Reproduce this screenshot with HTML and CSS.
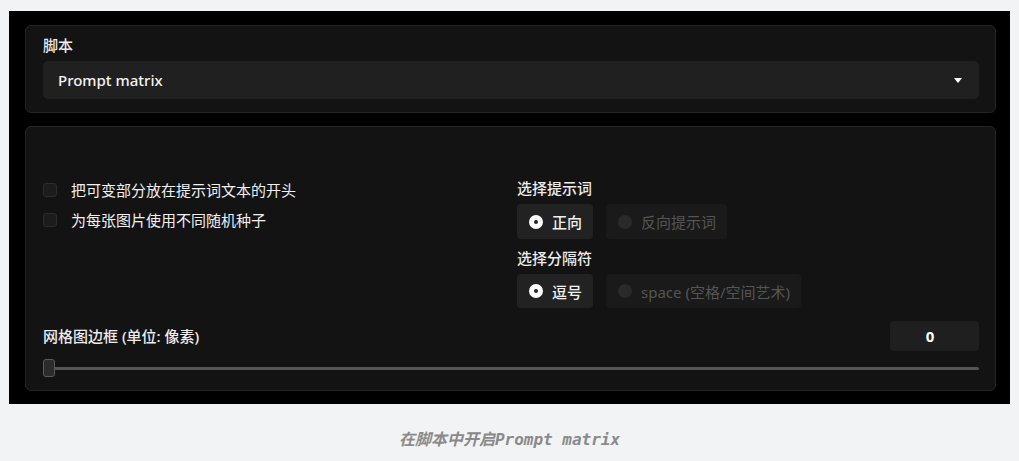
FILE: index.html
```html
<!doctype html>
<html lang="zh-CN">
    <head>
        <meta charset="UTF-8" />
        <meta name="viewport" content="width=device-width, initial-scale=1.0" />
        <title>Prompt matrix</title>
        <link rel="stylesheet" href="styles.css">
    </head>
    <body>
        <div class="shot">
            <div class="panel panel-script">
                <div class="label">脚本</div>
                <div class="select">
                    <span>Prompt matrix</span>
                    <span class="caret"></span>
                </div>
            </div>

            <div class="panel panel-options">
                <div class="columns">
                    <div class="checks">
                        <div class="check-row">
                            <span class="checkbox"></span>
                            <span>把可变部分放在提示词文本的开头</span>
                        </div>
                        <div class="check-row">
                            <span class="checkbox"></span>
                            <span>为每张图片使用不同随机种子</span>
                        </div>
                    </div>

                    <div class="radios">
                        <div class="label">选择提示词</div>
                        <div class="radio-row">
                            <div class="radio-option">
                                <span class="radio checked"></span>
                                <span>正向</span>
                            </div>
                            <div class="radio-option disabled">
                                <span class="radio"></span>
                                <span>反向提示词</span>
                            </div>
                        </div>

                        <div class="label label-gap">选择分隔符</div>
                        <div class="radio-row">
                            <div class="radio-option">
                                <span class="radio checked"></span>
                                <span>逗号</span>
                            </div>
                            <div class="radio-option disabled">
                                <span class="radio"></span>
                                <span>space (空格/空间艺术)</span>
                            </div>
                        </div>
                    </div>
                </div>

                <div class="slider-block">
                    <div class="slider-head">
                        <div class="label">网格图边框 (单位: 像素)</div>
                        <div class="number">0</div>
                    </div>
                    <div class="slider">
                        <div class="track"></div>
                        <div class="thumb"></div>
                    </div>
                </div>
            </div>
        </div>

        <p class="caption">在脚本中开启Prompt matrix</p>
    </body>
</html>
```

FILE: styles.css
```css
body {
    margin: 0;
    background: #f2f3f5;
    font-family: 'Noto Sans', 'Noto Sans CJK SC', sans-serif;
    font-size: 15px;
    color: #ededed;
}

.shot {
    margin: 11px 9px 0;
    padding: 14px 14px 13px 16px;
    background: #000;
    display: flex;
    flex-direction: column;
    gap: 13px;
}

.panel {
    background: #131313;
    border: 1px solid #252525;
    border-radius: 6px;
}

.label {
    line-height: 20px;
    font-weight: 500;
    color: #ececec;
}

/* script select */
.panel-script {
    padding: 9px 16px 13px 17px;
}

.select {
    margin-top: 6px;
    height: 38px;
    padding: 0 17px 0 15px;
    background: #202020;
    border-radius: 5px;
    display: flex;
    align-items: center;
    justify-content: space-between;
    font-weight: 500;
    color: #f4f4f4;
}

.caret {
    width: 0;
    height: 0;
    border-left: 4px solid transparent;
    border-right: 4px solid transparent;
    border-top: 5px solid #fff;
}

/* options panel */
.panel-options {
    padding: 51px 16px 13px 17px;
}

.columns {
    display: grid;
    grid-template-columns: 1fr 1fr;
    gap: 12px;
}

.checks {
    padding-top: 2px;
    display: flex;
    flex-direction: column;
    gap: 10px;
}

.check-row {
    display: flex;
    align-items: center;
    gap: 14px;
    line-height: 20px;
    color: #f0f0f0;
}

.checkbox {
    width: 12px;
    height: 12px;
    background: #1c1c1c;
    border: 1px solid #2c2c2c;
    border-radius: 3px;
}

.radios .label-gap {
    margin-top: 9px;
}

.radio-row {
    margin-top: 6px;
    display: flex;
    gap: 13px;
}

.radio-option {
    height: 35px;
    padding: 0 11px 0 12px;
    background: #222;
    border-radius: 4px;
    display: flex;
    align-items: center;
    gap: 9px;
    font-weight: 500;
    color: #f0f0f0;
}

.radio-row + .label + .radio-row .radio-option {
    height: 34px;
}

.radio {
    width: 14px;
    height: 14px;
    box-sizing: border-box;
    border-radius: 50%;
    background: #2a2a2a;
}

.radio.checked {
    border: 5px solid #fff;
    background: #222;
}

.radio-option.disabled {
    background: #1a1a1a;
    color: #555;
    font-weight: 400;
}

/* grid border slider */
.slider-block {
    margin-top: 13px;
}

.slider-head {
    display: flex;
    align-items: center;
    justify-content: space-between;
}

.number {
    width: 80px;
    height: 30px;
    padding-right: 9px;
    line-height: 30px;
    background: #1f1f1f;
    border-radius: 4px;
    text-align: center;
    font-weight: 700;
    color: #fff;
}

.slider {
    position: relative;
    margin-top: 8px;
    height: 18px;
    display: flex;
    align-items: center;
}

.track {
    flex: 1;
    height: 3px;
    background: #555;
    border-radius: 2px;
}

.thumb {
    position: absolute;
    left: 0;
    top: 0;
    width: 10px;
    height: 16px;
    background: #2b2b2b;
    border: 1px solid #5a5a5a;
    border-radius: 3px;
}

.caption {
    margin: 25px 0 0;
    line-height: 22px;
    text-align: center;
    font-family: 'DejaVu Sans Mono', 'Noto Sans CJK SC', monospace;
    font-size: 16px;
    font-weight: 700;
    font-style: italic;
    color: #8a8a8a;
}
```
